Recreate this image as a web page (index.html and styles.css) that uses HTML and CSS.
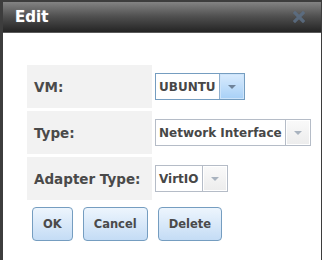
FILE: index.html
```html
<!DOCTYPE html>
<html lang="en">
<head>
    <meta charset="UTF-8">
    <title>Edit</title>
    <link rel="stylesheet" href="styles.css">
</head>
<body>

    <div class="dialog">
        <!-- title bar -->
        <div class="titlebar">
            <span class="title">Edit</span>
            <svg class="close" width="12" height="12" viewBox="0 0 12 12">
                <path d="M2 2 L10 10 M10 2 L2 10" stroke="#5c6f85" stroke-width="3.2" stroke-linecap="square"/>
            </svg>
        </div>

        <div class="content">
            <table class="form">
                <tr>
                    <td class="label">VM:</td>
                    <td class="value">
                        <div class="select focused">
                            <span class="text">UBUNTU</span>
                            <span class="arrow"><i></i></span>
                        </div>
                    </td>
                </tr>
                <tr>
                    <td class="label">Type:</td>
                    <td class="value">
                        <div class="select">
                            <span class="text">Network Interface</span>
                            <span class="arrow"><i></i></span>
                        </div>
                    </td>
                </tr>
                <tr>
                    <td class="label">Adapter Type:</td>
                    <td class="value">
                        <div class="select">
                            <span class="text">VirtIO</span>
                            <span class="arrow"><i></i></span>
                        </div>
                    </td>
                </tr>
            </table>

            <div class="buttons">
                <button class="btn">OK</button>
                <button class="btn">Cancel</button>
                <button class="btn">Delete</button>
            </div>
        </div>
    </div>

</body>
</html>
```

FILE: styles.css
```css
html, body {
    margin: 0;
    height: 100%;
}

body {
    background: #3d3d3d;
    font-family: "DejaVu Sans", Verdana, sans-serif;
}

.dialog {
    margin: 2px 1px 0 3px;
    height: 258px;
    background: #fff;
}

.titlebar {
    height: 30px;
    display: flex;
    align-items: center;
    justify-content: space-between;
    padding: 0 16px 0 12px;
    background: linear-gradient(#838383, #4e4e4e 50%, #242424);
    border-bottom: 1px solid #5a5a5a;
}

.title {
    color: #fff;
    font-size: 15px;
    font-weight: bold;
    text-shadow: 0 0 1px rgba(255, 255, 255, 0.4);
}

.close {
    opacity: 0.85;
}

.content {
    padding: 29px 0 0 21px;
}

.form {
    border-collapse: separate;
    border-spacing: 3px;
}

.label {
    width: 125px;
    height: 43px;
    padding: 0 0 0 7px;
    background: #f2f2f2;
    color: #4a4a4a;
    font-size: 13.5px;
    font-weight: bold;
    box-sizing: border-box;
}

.value {
    padding: 0;
    vertical-align: middle;
}

.select {
    display: inline-flex;
    height: 27px;
    border: 1px solid #b5bcc7;
    box-sizing: border-box;
    background: #fff;
}

.select .text {
    display: flex;
    align-items: center;
    padding: 0 3px;
    font-size: 12px;
    font-weight: bold;
    color: #474747;
}

.select .arrow {
    width: 24px;
    display: flex;
    align-items: center;
    justify-content: center;
    border-left: 1px solid #b5bcc7;
    box-shadow: inset 0 0 0 1px #fff;
    background: linear-gradient(#fafafa, #ececec);
}

.select .arrow i {
    width: 0;
    height: 0;
    border-left: 4px solid transparent;
    border-right: 4px solid transparent;
    border-top: 4px solid #a9b3bf;
}

.select.focused {
    border-color: #759dc0;
}

.select.focused .arrow {
    border-left-color: #8fb0cf;
    box-shadow: inset 0 0 0 1px #cde4fa;
    background: linear-gradient(#d9ebfd, #a7d0f7);
}

.select.focused .arrow i {
    border-top-color: #6f839a;
}

.buttons {
    display: flex;
    gap: 10px;
    margin: 4px 0 0 8px;
}

.btn {
    height: 34px;
    padding: 0 10px;
    border: 1px solid #759dc0;
    border-radius: 4px;
    background: linear-gradient(#edf5fd, #c4dcf5);
    color: #4a4a4a;
    font-family: "DejaVu Sans", Verdana, sans-serif;
    font-size: 11.5px;
    font-weight: bold;
}
```
